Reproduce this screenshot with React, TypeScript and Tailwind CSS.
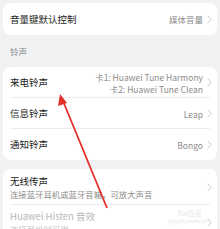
import React from "react";

const font = { fontFamily: '"Noto Sans CJK SC", "Noto Sans", sans-serif' };

function Chevron() {
  return (
    <svg width="5" height="9" viewBox="0 0 5 9" className="shrink-0 ml-[4px]">
      <path d="M0.7 0.7 L4.2 4.5 L0.7 8.3" fill="none" stroke="#c4c4c4" strokeWidth="0.9" />
    </svg>
  );
}

function Row({ title, value, last }: { title: string; value: React.ReactNode; last?: boolean }) {
  return (
    <div className="h-[31px] flex items-center pl-[7px] pr-[5px] relative">
      <span className="text-[9.5px] text-[#1a1a1a] flex-1">{title}</span>
      <div className="text-[8.5px] text-[#8c8c8c] text-right leading-[12px]">{value}</div>
      <Chevron />
      {!last && <div className="absolute left-[7px] right-[7px] bottom-0 h-px bg-[#ededed]" />}
    </div>
  );
}

export default function App() {
  return (
    <div className="w-[220px] h-[229px] bg-[#f1f2f4] overflow-hidden relative px-[3px] pt-[3px]" style={font}>
      <div className="bg-white rounded-[8px] h-[32px] flex items-center pl-[7px] pr-[5px]">
        <span className="text-[9.5px] text-[#1a1a1a] flex-1">音量键默认控制</span>
        <span className="text-[8.5px] text-[#8c8c8c]">媒体音量</span>
        <Chevron />
      </div>

      <div className="h-[32px] flex items-center pl-[7px] text-[8.5px] text-[#8a8a8a]">铃声</div>

      <div className="bg-white rounded-[8px]">
        <Row
          title="来电铃声"
          value={
            <>
              <div>卡1: Huawei Tune Harmony</div>
              <div>卡2: Huawei Tune Clean</div>
            </>
          }
        />
        <Row title="信息铃声" value="Leap" />
        <Row title="通知铃声" value="Bongo" last />
      </div>

      <div className="bg-white rounded-[8px] mt-[9px] h-[80px]">
        <div className="h-[36px] flex items-center pl-[7px] pr-[5px] relative">
          <div className="flex-1">
            <div className="text-[9.5px] text-[#1a1a1a] leading-[13px]">无线传声</div>
            <div className="text-[8.4px] text-[#8c8c8c] leading-[12px]">连接蓝牙耳机或蓝牙音箱，可放大声音</div>
          </div>
          <Chevron />
          <div className="absolute left-[7px] right-[7px] bottom-0 h-px bg-[#ededed]" />
        </div>
        <div className="h-[36px] flex items-start pt-[5px] pl-[7px] pr-[5px] relative">
          <div className="flex-1">
            <div className="text-[9.5px] text-[#b8b8b8] leading-[13px]">Huawei Histen 音效</div>
            <div className="text-[8.4px] text-[#c4c4c4] leading-[12px]">连接耳机时可用</div>
          </div>
          <div className="mt-[8px]">
            <Chevron />
          </div>
        </div>
      </div>

      <div className="absolute left-[168px] top-[210px] text-[#e6e8ec] leading-none flex flex-col items-center">
        <span className="text-[7px]">Bai百度</span>
        <span className="text-[5px] mt-[1px]">jingyan.baidu.com</span>
      </div>

      <svg className="absolute left-0 top-0 pointer-events-none" width="220" height="229" viewBox="0 0 220 229">
        <line x1="107" y1="208" x2="63" y2="101" stroke="#e3302c" strokeWidth="1.8" />
        <polygon points="60,94 58,106 67,103" fill="#e3302c" />
      </svg>
    </div>
  );
}
